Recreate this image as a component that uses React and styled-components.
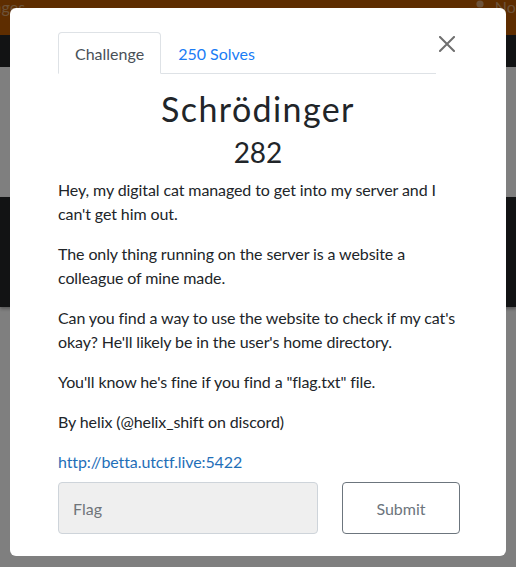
import React from "react";
import styled, { createGlobalStyle } from "styled-components";

const Global = createGlobalStyle`
  html, body { margin: 0; padding: 0; }
  body {
    font-family: Lato, "Noto Sans", sans-serif;
    background: #fefefe;
    overflow: hidden;
  }
  * { box-sizing: border-box; }
`;

const Page = styled.div`
  width: 516px;
  height: 567px;
  display: flex;
  flex-direction: column;
  background: #fefefe;
  overflow: hidden;
`;

const Navbar = styled.nav`
  height: 35px;
  background: #bc5b00;
  display: flex;
  justify-content: space-between;
  align-items: flex-start;
  font-size: 16px;
  line-height: 14px;
  color: rgba(255, 255, 255, 0.45);
`;

const NavLink = styled.span`
  flex-shrink: 0;
  margin-left: ${(p) => p.$offset || 0}px;
  margin-right: ${(p) => p.$right || 0}px;
  white-space: nowrap;
  display: flex;
  align-items: center;
  gap: 9px;
`;

const SubBar = styled.div`
  height: 32px;
  background: #242628;
`;

const Spacer = styled.div`
  height: ${(p) => p.$h}px;
`;

const Jumbotron = styled.div`
  height: 110px;
  background: #242628;
  box-shadow: 0 2px 3px rgba(0, 0, 0, 0.3);
`;

const Backdrop = styled.div`
  position: fixed;
  inset: 0;
  background: rgba(0, 0, 0, 0.5);
  padding: 8px 10px;
`;

const Modal = styled.div`
  width: 496px;
  background: #fff;
  border-radius: 6px;
  padding: 24px 48px 22px 48px;
  color: #212529;
`;

const HeaderRow = styled.div`
  display: flex;
  align-items: flex-start;
`;

const Tabs = styled.div`
  flex: 1;
  display: flex;
  border-bottom: 1px solid #dee2e6;
  height: 42px;
`;

const Tab = styled.div`
  height: 42px;
  padding: 0 16px;
  display: flex;
  align-items: center;
  font-size: 16px;
  border: 1px solid ${(p) => (p.$active ? "#dee2e6" : "transparent")};
  border-bottom-color: ${(p) => (p.$active ? "#fff" : "transparent")};
  border-radius: 4px 4px 0 0;
  background: ${(p) => (p.$active ? "#fff" : "transparent")};
  color: ${(p) => (p.$active ? "#495057" : "#1a7cf5")};
  margin-bottom: -1px;
`;

const CloseButton = styled.div`
  width: 22px;
  padding-top: 4px;
  display: flex;
  justify-content: center;
`;

const Title = styled.h2`
  margin: 0 0 6px;
  padding-top: 15px;
  text-align: center;
  font-size: 34px;
  font-weight: 400;
  line-height: 1.2;
  letter-spacing: 1.4px;
  color: #212529;
`;

const Value = styled.h3`
  margin: 0 0 9px;
  text-align: center;
  font-size: 28px;
  font-weight: 400;
  line-height: 1.2;
  color: #212529;
`;

const Description = styled.div`
  margin-right: -6px;
  letter-spacing: -0.1px;
`;

const Para = styled.p`
  margin: 0 0 ${(p) => (p.$tight ? 8 : 16)}px;
  font-size: 16px;
  line-height: 24px;
`;

const Link = styled.a`
  color: #1f6fb8;
  text-decoration: none;
`;

const FormRow = styled.div`
  display: grid;
  grid-template-columns: 260px 118px;
  column-gap: 24px;
`;

const FlagInput = styled.input`
  height: 52px;
  border: 1px solid #ced4da;
  border-radius: 4px;
  background: #efefef;
  padding: 0 14px;
  font-family: Lato, sans-serif;
  font-size: 16px;
  color: #495057;
  &::placeholder { color: #70757a; }
`;

const SubmitButton = styled.button`
  height: 52px;
  border: 1px solid #6c757d;
  border-radius: 4px;
  background: #fff;
  font-family: Lato, sans-serif;
  font-size: 16px;
  color: #6c757d;
`;

export default function App() {
  return (
    <>
      <Global />
      <Page>
        <Navbar>
          <NavLink $offset={-51}>Challenges</NavLink>
          <NavLink $right={-69}>
            <svg width="12" height="14" viewBox="0 0 12 14">
              <circle cx="6" cy="4" r="3.6" fill="rgba(255,255,255,0.45)" />
              <path d="M0 14 C0 9 2.5 8.5 6 8.5 C9.5 8.5 12 9 12 14 Z" fill="rgba(255,255,255,0.45)" />
            </svg>
            Notifications
          </NavLink>
        </Navbar>
        <SubBar />
        <Spacer $h={130} />
        <Jumbotron />
      </Page>
      <Backdrop>
        <Modal>
          <HeaderRow>
            <Tabs>
              <Tab $active>Challenge</Tab>
              <Tab>250 Solves</Tab>
            </Tabs>
            <CloseButton>
              <svg width="16" height="16" viewBox="0 0 16 16">
                <path d="M1 1 L15 15 M15 1 L1 15" stroke="#6f6f6f" strokeWidth="2" strokeLinecap="square" />
              </svg>
            </CloseButton>
          </HeaderRow>
          <Title>Schrödinger</Title>
          <Value>282</Value>
          <Description>
            <Para>Hey, my digital cat managed to get into my server and I can't get him out.</Para>
            <Para>The only thing running on the server is a website a colleague of mine made.</Para>
            <Para>Can you find a way to use the website to check if my cat's okay? He'll likely be in the user's home directory.</Para>
            <Para>You'll know he's fine if you find a "flag.txt" file.</Para>
            <Para>By helix (@helix_shift on discord)</Para>
            <Para $tight>
              <Link href="#">http://betta.utctf.live:5422</Link>
            </Para>
          </Description>
          <FormRow>
            <FlagInput placeholder="Flag" />
            <SubmitButton>Submit</SubmitButton>
          </FormRow>
        </Modal>
      </Backdrop>
    </>
  );
}
